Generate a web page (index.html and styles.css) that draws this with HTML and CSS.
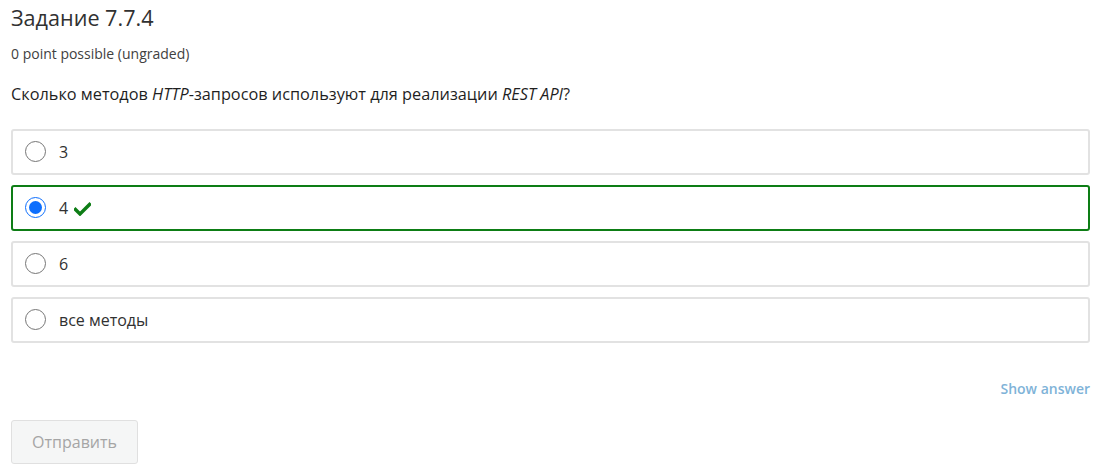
FILE: index.html
```html
<!DOCTYPE html>
<html lang="ru">
<head>
<meta charset="utf-8">
<title>Задание 7.7.4</title>
<link rel="stylesheet" href="styles.css">
</head>
<body>
<div class="problem">
  <h3 class="title">Задание 7.7.4</h3>
  <div class="points">0 point possible (ungraded)</div>
  <p class="question">Сколько методов <em>HTTP</em>-запросов используют для реализации <em>REST API</em>?</p>
  <div class="choices">
    <label class="choice"><span class="radio"></span><span class="label">3</span></label>
    <label class="choice correct"><span class="radio checked"></span><span class="label">4</span>
      <svg class="check" width="17" height="14" viewBox="0 0 17 14"><path d="M1.5 7.5 L6 12 L15.5 2.5" fill="none" stroke="#0d7d15" stroke-width="3.4" stroke-linecap="square"/></svg>
    </label>
    <label class="choice"><span class="radio"></span><span class="label">6</span></label>
    <label class="choice"><span class="radio"></span><span class="label">все методы</span></label>
  </div>
  <div class="actions-top"><a class="show-answer">Show answer</a></div>
  <div class="actions"><button class="submit" disabled>Отправить</button></div>
</div>
</body>
</html>
```
FILE: styles.css
```css
html, body { margin: 0; padding: 0; background: #fff; }
body { font-family: "Open Sans", "DejaVu Sans", sans-serif; color: #313131; }
.problem { padding: 0 13px 0 11px; }
.title { margin: 0; padding-top: 3px; font-size: 21.6px; font-weight: 400; line-height: 30px; color: #313131; }
.points { margin-top: 12px; font-size: 14px; line-height: 18px; color: #414141; }
.question { margin: 20px 0 0 0; font-size: 16.3px; line-height: 22px; color: #1f1f1f; }
.question em { font-style: italic; }
.choices { margin-top: 24px; display: flex; flex-direction: column; gap: 10px; }
.choice { display: flex; align-items: center; height: 46px; box-sizing: border-box; border: 2px solid #e2e2e2; border-radius: 3px; padding-left: 12px; font-size: 16px; color: #313131; }
.choice.correct { border-color: #0d7d15; }
.radio { width: 21px; height: 21px; border: 1px solid #767676; border-radius: 50%; box-sizing: border-box; background: #fff; flex: none; position: relative; margin-top: -1px; }
.radio.checked { border: 1px solid #0d6efd; }
.radio.checked::after { content: ""; position: absolute; left: 3px; top: 3px; width: 13px; height: 13px; border-radius: 50%; background: #0d6efd; }
.label { margin-left: 13px; }
.check { margin-left: 6px; margin-top: 1px; }
.actions-top { margin-top: 36px; display: flex; justify-content: flex-end; }
.show-answer { font-size: 14px; font-weight: 600; color: #7fb3d8; line-height: 20px; }
.actions { margin-top: 21px; }
.submit { font-family: "Open Sans", sans-serif; font-size: 16px; color: #a5a5a5; background: #f5f6f6; border: 1px solid #e0e0e0; border-radius: 3px; width: 127px; height: 44px; padding: 0; }
```
